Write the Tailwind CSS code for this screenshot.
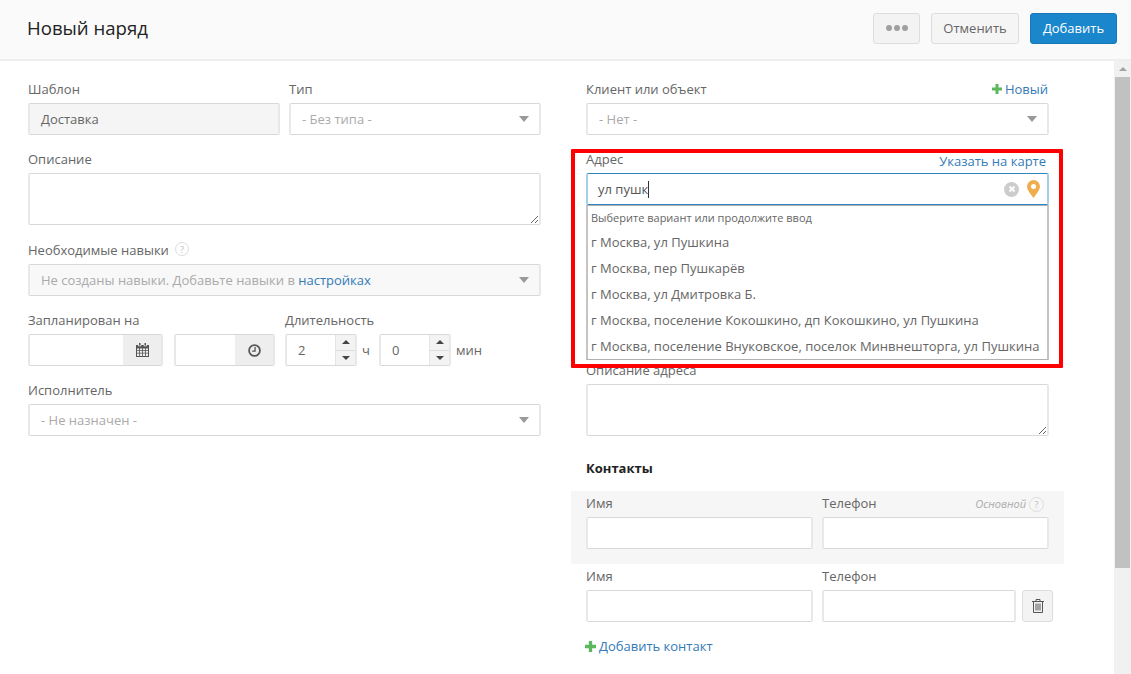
<!DOCTYPE html>
<html lang="ru">
<head>
    <meta charset="UTF-8">
    <title>Новый наряд</title>
    <script src="https://cdn.jsdelivr.net/npm/@tailwindcss/browser@4"></script>
</head>
<body class="h-screen overflow-hidden flex flex-col bg-white text-[13px] leading-5 text-[#666] font-['Open_Sans',sans-serif]">
    <!-- Header -->
    <header class="h-[61px] shrink-0 flex items-center bg-[#fafafa] border-b-2 border-[#eee] pl-[27px] pr-[14px] pb-[3px]">
        <h1 class="text-[18.6px] leading-6 text-[#222]">Новый наряд</h1>
        <div class="ml-auto flex gap-[11px]">
            <button class="w-[47px] h-[31px] flex items-center justify-center gap-[2px] bg-[#f3f3f3] border border-[#ddd] rounded-[3px]">
                <span class="w-[6px] h-[6px] rounded-full bg-[#a0a0a0]"></span>
                <span class="w-[6px] h-[6px] rounded-full bg-[#a0a0a0]"></span>
                <span class="w-[6px] h-[6px] rounded-full bg-[#a0a0a0]"></span>
            </button>
            <button class="w-[88px] h-[31px] bg-[#f5f5f5] border border-[#ddd] rounded-[3px] text-[#666]">Отменить</button>
            <button class="w-[87px] h-[31px] bg-[#1a87cd] border border-[#1878b6] rounded-[3px] text-white">Добавить</button>
        </div>
    </header>

    <div class="flex-1 min-h-0 flex relative">
        <main class="flex-1 flex pt-[18px] pl-[28px]">
            <!-- Left column -->
            <section class="w-[513px] shrink-0 flex flex-col gap-[14px]">
                <div class="flex gap-[9px]">
                    <div class="w-[252px]">
                        <label class="block h-5 mb-1">Шаблон</label>
                        <div class="h-8 flex items-center px-[11px] bg-[#f5f5f5] border-x-2 border-y border-x-[#e8e8e8] border-y-[#d8d8d8] rounded-[2px]">Доставка</div>
                    </div>
                    <div class="flex-1">
                        <label class="block h-5 mb-1">Тип</label>
                        <div class="h-8 flex items-center justify-between pl-[11px] pr-[10px] border-x-2 border-y border-x-[#e8e8e8] border-y-[#d8d8d8] rounded-[2px] text-[#aaa]">
                            <span>- Без типа -</span>
                            <span class="w-0 h-0 border-x-[5px] border-t-[6px] border-x-transparent border-t-[#999]"></span>
                        </div>
                    </div>
                </div>

                <div>
                    <label class="block h-5 mb-1">Описание</label>
                    <textarea class="block w-full h-[52px] border-x-2 border-y border-x-[#e8e8e8] border-y-[#d8d8d8] rounded-[2px] outline-none"></textarea>
                </div>

                <div class="mt-[1px]">
                    <label class="flex items-center gap-[6px] h-5 mb-1">Необходимые навыки
                        <span class="w-[14px] h-[14px] -mt-[2px] rounded-full border border-[#ddd] flex items-center justify-center text-[9px] leading-none text-[#bbb]">?</span>
                    </label>
                    <div class="h-8 flex items-center justify-between pl-[11px] pr-[10px] bg-[#f8f8f8] border-x-2 border-y border-x-[#e8e8e8] border-y-[#d8d8d8] rounded-[2px] text-[#aaa]">
                        <span>Не созданы навыки. Добавьте навыки в <a class="text-[#337ab7]">настройках</a></span>
                        <span class="w-0 h-0 border-x-[5px] border-t-[6px] border-x-transparent border-t-[#999]"></span>
                    </div>
                </div>

                <div class="flex">
                    <div>
                        <label class="block h-5 mb-1">Запланирован на</label>
                        <div class="flex">
                            <div class="w-[135px] h-8 flex border-x-2 border-y border-x-[#e8e8e8] border-y-[#d8d8d8] rounded-[2px]">
                                <div class="flex-1"></div>
                                <div class="w-[38px] bg-[#eee] flex items-center justify-center">
                                    <svg width="13" height="14" viewBox="0 0 13 14" fill="#555">
                                        <path d="M3 0h1.500v2.500H3zM8.500 0H10v2.500H8.500zM0 2h2.200v1.300h3V2h2.600v1.300h3V2H13v12H0zm1 3.500v1.800h2V5.500zm2.800 0v1.800h2.300V5.500zm3.100 0v1.800h2.300V5.500zm3.100 0v1.800h2V5.500zM1 8v1.800h2V8zm2.800 0v1.800h2.300V8zm3.100 0v1.800h2.300V8zM10 8v1.800h2V8zM1 10.500V13h2v-2.500zm2.800 0V13h2.300v-2.500zm3.100 0V13h2.300v-2.500zm3.100 0V13h2v-2.500z"/>
                                    </svg>
                                </div>
                            </div>
                            <div class="ml-[11px] w-[101px] h-8 flex border-x-2 border-y border-x-[#e8e8e8] border-y-[#d8d8d8] rounded-[2px]">
                                <div class="flex-1"></div>
                                <div class="w-[38px] bg-[#eee] flex items-center justify-center">
                                    <svg width="13" height="13" viewBox="0 0 12 12" fill="none" stroke="#555" stroke-width="1.600">
                                        <circle cx="6" cy="6" r="5"/>
                                        <path stroke-width="1.200" d="M6.500 2.800v3.700H3.800"/>
                                    </svg>
                                </div>
                            </div>
                        </div>
                    </div>
                    <div class="ml-[10px]">
                        <label class="block h-5 mb-1">Длительность</label>
                        <div class="flex items-center">
                            <div class="w-[72px] h-8 flex border-x-2 border-y border-x-[#e8e8e8] border-y-[#d8d8d8] rounded-[2px]">
                                <span class="flex-1 pl-[11px] leading-[30px]">2</span>
                                <div class="w-5 flex flex-col bg-[#f3f3f3] border-l border-[#e5e5e5]">
                                    <span class="flex-1 flex items-center justify-center border-b border-[#ddd]"><span class="w-0 h-0 border-x-[4px] border-b-[4px] border-x-transparent border-b-[#444]"></span></span>
                                    <span class="flex-1 flex items-center justify-center"><span class="w-0 h-0 border-x-[4px] border-t-[4px] border-x-transparent border-t-[#444]"></span></span>
                                </div>
                            </div>
                            <span class="w-[22px] pl-[5px]">ч</span>
                            <div class="w-[72px] h-8 flex border-x-2 border-y border-x-[#e8e8e8] border-y-[#d8d8d8] rounded-[2px]">
                                <span class="flex-1 pl-[11px] leading-[30px]">0</span>
                                <div class="w-5 flex flex-col bg-[#f3f3f3] border-l border-[#e5e5e5]">
                                    <span class="flex-1 flex items-center justify-center border-b border-[#ddd]"><span class="w-0 h-0 border-x-[4px] border-b-[4px] border-x-transparent border-b-[#444]"></span></span>
                                    <span class="flex-1 flex items-center justify-center"><span class="w-0 h-0 border-x-[4px] border-t-[4px] border-x-transparent border-t-[#444]"></span></span>
                                </div>
                            </div>
                            <span class="pl-[5px]">мин</span>
                        </div>
                    </div>
                </div>

                <div>
                    <label class="block h-5 mb-1">Исполнитель</label>
                    <div class="h-8 flex items-center justify-between pl-[11px] pr-[10px] border-x-2 border-y border-x-[#e8e8e8] border-y-[#d8d8d8] rounded-[2px] text-[#aaa]">
                        <span>- Не назначен -</span>
                        <span class="w-0 h-0 border-x-[5px] border-t-[6px] border-x-transparent border-t-[#999]"></span>
                    </div>
                </div>
            </section>

            <!-- Right column -->
            <section class="ml-[45px] w-[463px] shrink-0 flex flex-col gap-[14px]">
                <div>
                    <div class="flex justify-between h-5 mb-1">
                        <label>Клиент или объект</label>
                        <a class="flex items-center gap-[3px] pr-[1px] text-[#337ab7]">
                            <svg width="10" height="10" viewBox="0 0 10 10" fill="#5cb85c"><path d="M3.500 0h3v3.500H10v3H6.500V10h-3V6.500H0v-3h3.500z"/></svg>
                            Новый
                        </a>
                    </div>
                    <div class="h-8 flex items-center justify-between pl-[11px] pr-[10px] border-x-2 border-y border-x-[#e8e8e8] border-y-[#d8d8d8] rounded-[2px] text-[#aaa]">
                        <span>- Нет -</span>
                        <span class="w-0 h-0 border-x-[5px] border-t-[6px] border-x-transparent border-t-[#999]"></span>
                    </div>
                </div>

                <!-- Address field with open suggestions -->
                <div class="h-[197px] relative">
                    <div class="flex justify-between h-5 mb-1">
                        <label>Адрес</label>
                        <a class="text-[#337ab7] pr-[3px] mt-[2px]">Указать на карте</a>
                    </div>
                    <div class="h-8 flex items-center pl-[10px] pr-[7px] border-x-2 border-y border-x-[#a5cde8] border-y-[#2e86c4] rounded-[2px] text-[#555]">
                        <span class="border-r border-[#333] h-[17px] leading-[17px]">ул пушк</span>
                        <span class="ml-auto w-[15px] h-[15px] rounded-full bg-[#ccc] flex items-center justify-center">
                            <svg width="8" height="8" viewBox="0 0 8 8" stroke="#fff" stroke-width="2"><path d="M1.500 1.500l5 5M6.500 1.500l-5 5"/></svg>
                        </span>
                        <svg class="ml-[8px]" width="13" height="18" viewBox="0 0 13 18"><path fill="#f0ad4e" fill-rule="evenodd" d="M6.500 0a6.500 6.500 0 0 1 6.500 6.500c0 3.500-4 8-6.500 11.500C4 14.500 0 10 0 6.500A6.500 6.500 0 0 1 6.500 0zm0 4a2.500 2.500 0 1 0 0 5 2.500 2.500 0 0 0 0-5z"/></svg>
                    </div>
                    <!-- Suggestions dropdown -->
                    <ul class="absolute left-0 right-0 top-[56px] h-[155px] bg-white border-x-2 border-y border-x-[#c4c4c4] border-y-[#b0b0b0] pl-[3px] leading-[26px] z-10">
                        <li class="text-[11px] leading-[24px] h-[23px]">Выберите вариант или продолжите ввод</li>
                        <li>г Москва, ул Пушкина</li>
                        <li>г Москва, пер Пушкарёв</li>
                        <li>г Москва, ул Дмитровка Б.</li>
                        <li>г Москва, поселение Кокошкино, дп Кокошкино, ул Пушкина</li>
                        <li>г Москва, поселение Внуковское, поселок Минвнешторга, ул Пушкина</li>
                    </ul>
                </div>

                <div>
                    <label class="block h-5 mb-1">Описание адреса</label>
                    <textarea class="block w-full h-[52px] border-x-2 border-y border-x-[#e8e8e8] border-y-[#d8d8d8] rounded-[2px] outline-none"></textarea>
                </div>

                <div class="mt-[8px]">
                    <h2 class="font-bold text-[#222] h-5 leading-5">Контакты</h2>
                    <div class="-mx-[15px] mt-[13px] h-[73px] bg-[#f6f6f6] px-[15px] pt-[2px]">
                        <div class="flex gap-[9px]">
                            <div class="w-[227px]">
                                <label class="block h-5 mb-1">Имя</label>
                                <div class="h-8 bg-white border-x-2 border-y border-x-[#e8e8e8] border-y-[#d8d8d8] rounded-[2px]"></div>
                            </div>
                            <div class="flex-1">
                                <div class="flex justify-between h-5 mb-1">
                                    <label>Телефон</label>
                                    <span class="flex items-center gap-[3px] pr-[5px] mt-[2px] text-[11px] italic text-[#aaa]">Основной
                                        <span class="w-[15px] h-[15px] rounded-full border border-[#ddd] flex items-center justify-center not-italic text-[9px] leading-none text-[#bbb]">?</span>
                                    </span>
                                </div>
                                <div class="h-8 bg-white border-x-2 border-y border-x-[#e8e8e8] border-y-[#d8d8d8] rounded-[2px]"></div>
                            </div>
                        </div>
                    </div>
                    <div class="flex gap-[9px] pt-[2px]">
                        <div class="w-[227px] shrink-0">
                            <label class="block h-5 mb-1">Имя</label>
                            <div class="h-8 border-x-2 border-y border-x-[#e8e8e8] border-y-[#d8d8d8] rounded-[2px]"></div>
                        </div>
                        <div class="flex-1 min-w-0">
                            <label class="block h-5 mb-1">Телефон</label>
                            <div class="flex">
                                <div class="w-[194px] h-8 shrink-0 border-x-2 border-y border-x-[#e8e8e8] border-y-[#d8d8d8] rounded-[2px]"></div>
                                <button class="ml-[6px] w-[31px] h-8 shrink-0 bg-[#f3f3f3] border border-[#ddd] rounded-[3px] flex items-center justify-center">
                                    <svg width="12" height="14" viewBox="0 0 12 14" fill="none" stroke="#555">
                                        <path d="M0 2.500h12M4 2.500V.5h4v2M1.500 2.500V13.500h9V2.500"/>
                                        <path d="M4 4.500v7M6 4.500v7M8 4.500v7"/>
                                    </svg>
                                </button>
                            </div>
                        </div>
                    </div>
                    <a class="flex items-center gap-[3px] -ml-[1px] mt-[14px] text-[#337ab7]">
                        <svg width="11" height="11" viewBox="0 0 10 10" fill="#5cb85c"><path d="M3.500 0h3v3.500H10v3H6.500V10h-3V6.500H0v-3h3.500z"/></svg>
                        Добавить контакт
                    </a>
                </div>
            </section>
        </main>

        <!-- Red highlight around the address field -->
        <div class="absolute left-[571px] top-[88px] w-[492px] h-[219px] border-4 border-[#f00] rounded-[1px] z-20 pointer-events-none"></div>

        <!-- Scrollbar -->
        <div class="w-[17px] shrink-0 bg-[#f1f1f1] flex flex-col items-center">
            <span class="mt-[6px] w-0 h-0 border-x-[4px] border-b-[4px] border-x-transparent border-b-[#a3a3a3]"></span>
            <div class="mt-[6px] w-[15px] h-[491px] bg-[#c1c1c1]"></div>
        </div>
    </div>
</body>
</html>
